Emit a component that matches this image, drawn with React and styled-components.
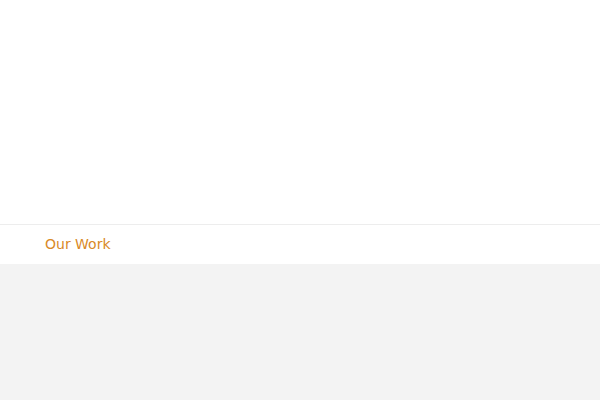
import React from 'react';
import styled, { createGlobalStyle } from 'styled-components';

const GlobalStyle = createGlobalStyle`
  html, body {
    margin: 0;
    padding: 0;
    height: 100%;
    background: #f3f3f3;
    font-family: "DejaVu Sans", sans-serif;
  }
  #root {
    min-height: 100%;
  }
`;

const Page = styled.div`
  display: flex;
  flex-direction: column;
  min-height: 400px;
  background: #f3f3f3;
`;

const Hero = styled.div`
  height: 224px;
  background: #ffffff;
`;

const NavBar = styled.nav`
  display: flex;
  align-items: center;
  height: 40px;
  padding: 0 45px 2px;
  box-sizing: border-box;
  background: #ffffff;
  border-top: 1px solid #ededed;
`;

const NavLink = styled.a`
  color: #d98a28;
  font-size: 14px;
  text-decoration: none;
`;

const App = () => {
  return (
    <>
      <GlobalStyle />
      <Page>
        <Hero />
        <NavBar>
          <NavLink href="#">Our Work</NavLink>
        </NavBar>
      </Page>
    </>
  );
};

export default App;
